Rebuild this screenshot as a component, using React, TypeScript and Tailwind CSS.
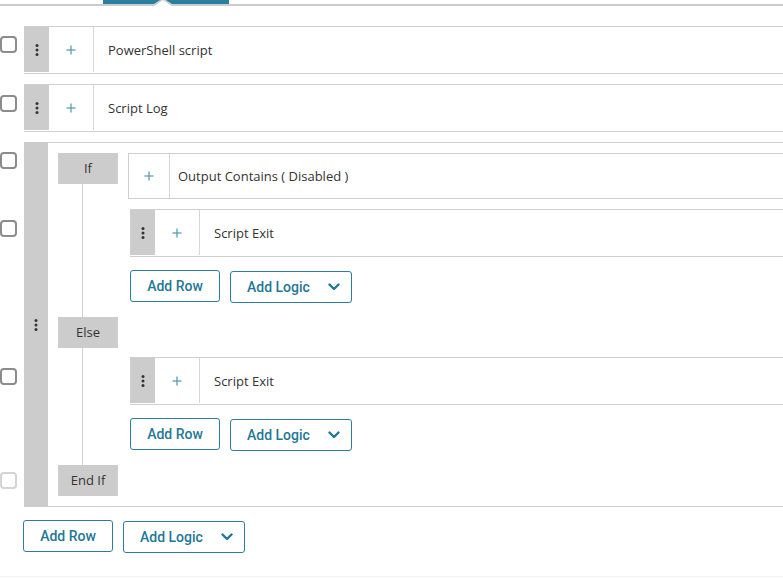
import React from "react";

const Checkbox = ({ disabled = false }: { disabled?: boolean }) => (
  <div
    className={`w-[17px] h-[17px] rounded-[4px] border-2 bg-white ${
      disabled ? "border-[#d4d4d4]" : "border-[#8c8c8c]"
    }`}
  />
);

const Dots = () => (
  <svg width="4" height="12" viewBox="0 0 4 12">
    <circle cx="2" cy="1.6" r="1.5" fill="#333" />
    <circle cx="2" cy="6" r="1.5" fill="#333" />
    <circle cx="2" cy="10.4" r="1.5" fill="#333" />
  </svg>
);

const Plus = () => (
  <svg width="10" height="10" viewBox="0 0 10 10">
    <line x1="5" y1="0.5" x2="5" y2="9.5" stroke="#5a9db6" strokeWidth="1.3" />
    <line x1="0.5" y1="5" x2="9.5" y2="5" stroke="#5a9db6" strokeWidth="1.3" />
  </svg>
);

const Chevron = () => (
  <svg width="12" height="8" viewBox="0 0 12 8">
    <polyline
      points="1.5,1.5 6,6 10.5,1.5"
      fill="none"
      stroke="#1f7896"
      strokeWidth="2.4"
      strokeLinecap="round"
      strokeLinejoin="round"
    />
  </svg>
);

const ActionCard = ({ label }: { label: string }) => (
  <div className="flex-1 border-y border-[#cfcfcf] pb-px">
    <div className="flex h-[45px]">
      <div className="w-[25px] shrink-0 bg-[#cccccc] flex items-center justify-center">
        <Dots />
      </div>
      <div className="w-[45px] shrink-0 border-r border-[#d6d6d6] flex items-center justify-center">
        <Plus />
      </div>
      <div className="pl-[14px] pt-[2px] flex items-center text-[13px] text-[#333]">{label}</div>
    </div>
  </div>
);

const Buttons = () => (
  <div className="flex items-start gap-[10px] font-['Roboto',sans-serif]">
    <button className="w-[90px] h-[32px] border border-[#2a7f9c] rounded-[3px] text-[14px] font-medium text-[#1f7896] flex items-center justify-center bg-white">
      Add Row
    </button>
    <button className="mt-px w-[122px] h-[32px] border border-[#2a7f9c] rounded-[3px] text-[14px] font-medium text-[#1f7896] flex items-center justify-between pl-[16px] pr-[11px] bg-white">
      <span>Add Logic</span>
      <Chevron />
    </button>
  </div>
);

const Label = ({ text }: { text: string }) => (
  <div className="ml-[10px] w-[60px] h-[31px] shrink-0 bg-[#cccccc] flex items-center justify-center text-[13px] text-[#333]">
    {text}
  </div>
);

const VLine = ({ grow = true, h = "" }: { grow?: boolean; h?: string }) => (
  <div className={`ml-[34px] w-px bg-[#cfcfcf] ${grow ? "flex-1" : h}`} />
);

export default function App() {
  return (
    <div className="w-[783px] h-[578px] overflow-hidden bg-white flex flex-col font-['Open_Sans',sans-serif]">
      <div className="w-[800px] flex flex-col">
        {/* tab indicator */}
        <svg width="783" height="6" viewBox="0 0 783 6" className="block">
          <rect x="0" y="4" width="783" height="2" fill="#cccccc" />
          <rect x="103" y="0" width="126" height="4" fill="#2b7f9e" />
          <polygon points="154,6 163,-1 172,6" fill="#ffffff" />
          <polyline points="154,5 163,-1 172,5" fill="none" stroke="#cccccc" strokeWidth="1.6" />
        </svg>

        {/* Row 1 */}
        <div className="flex mt-[20px]">
          <div className="w-[24px] shrink-0 pt-[10px]">
            <Checkbox />
          </div>
          <ActionCard label="PowerShell script" />
        </div>

        {/* Row 2 */}
        <div className="flex mt-[10px]">
          <div className="w-[24px] shrink-0 pt-[11px]">
            <Checkbox />
          </div>
          <ActionCard label="Script Log" />
        </div>

        {/* If block */}
        <div className="grid grid-cols-[24px_24px_80px_1fr] mt-[10px]">
          {/* bar */}
          <div className="col-start-2 row-start-1 row-span-7 bg-[#cccccc] flex items-center justify-center">
            <Dots />
          </div>

          {/* R1 */}
          <div className="col-start-1 row-start-1 pt-[10px]">
            <Checkbox />
          </div>
          <div className="col-start-3 row-start-1 border-t border-[#cfcfcf] pt-[10px] flex flex-col">
            <Label text="If" />
            <VLine />
          </div>
          <div className="col-start-4 row-start-1 border-t border-[#cfcfcf] pt-[10px]">
            <div className="h-[46px] border border-[#cfcfcf] flex">
              <div className="w-[41px] shrink-0 border-r border-[#d6d6d6] flex items-center justify-center">
                <Plus />
              </div>
              <div className="pl-[8px] pt-[2px] flex items-center text-[13px] text-[#333]">
                Output Contains ( Disabled )
              </div>
            </div>
          </div>

          {/* R2 */}
          <div className="col-start-1 row-start-2 pt-[21px]">
            <Checkbox />
          </div>
          <div className="col-start-3 row-start-2 flex flex-col">
            <VLine />
          </div>
          <div className="col-start-4 row-start-2 pt-[10px] pl-[2px] flex">
            <ActionCard label="Script Exit" />
          </div>

          {/* R3 */}
          <div className="col-start-3 row-start-3 flex flex-col">
            <VLine />
          </div>
          <div className="col-start-4 row-start-3 pt-[13px] pl-[2px]">
            <Buttons />
          </div>

          {/* R4 */}
          <div className="col-start-3 row-start-4 flex flex-col">
            <VLine grow={false} h="h-[14px]" />
            <Label text="Else" />
          </div>

          {/* R5 */}
          <div className="col-start-1 row-start-5 pt-[20px]">
            <Checkbox />
          </div>
          <div className="col-start-3 row-start-5 flex flex-col">
            <VLine />
          </div>
          <div className="col-start-4 row-start-5 pt-[9px] pl-[2px] flex">
            <ActionCard label="Script Exit" />
          </div>

          {/* R6 */}
          <div className="col-start-3 row-start-6 flex flex-col">
            <VLine />
          </div>
          <div className="col-start-4 row-start-6 pt-[13px] pl-[2px]">
            <Buttons />
          </div>

          {/* R7 */}
          <div className="col-start-1 row-start-7 pt-[21px]">
            <Checkbox disabled />
          </div>
          <div className="col-start-3 row-start-7 border-b border-[#cfcfcf] pb-[10px] flex flex-col">
            <VLine grow={false} h="h-[14px]" />
            <Label text="End If" />
          </div>
          <div className="col-start-4 row-start-7 border-b border-[#cfcfcf]" />
        </div>

        {/* bottom buttons */}
        <div className="pt-[13px] pl-[23px]">
          <Buttons />
        </div>
      </div>
      <div className="mt-auto h-[2px] border-t border-[#f2f2f2]" />
    </div>
  );
}
